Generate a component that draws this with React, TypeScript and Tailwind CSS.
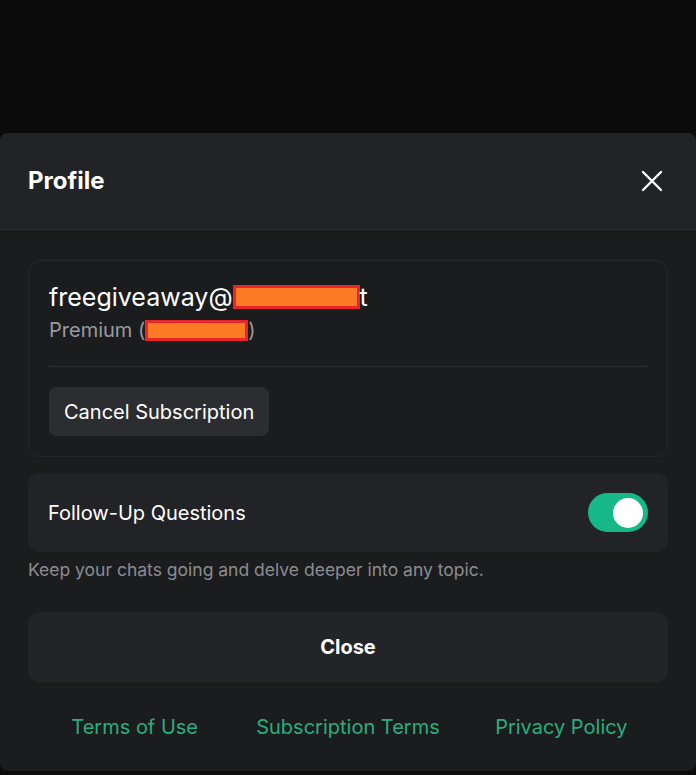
import React, { useState } from 'react';

const Redacted: React.FC<{ width: number; height: number }> = ({ width, height }) => (
  <span
    className="inline-block align-middle border-[3px] border-[#e8262a] bg-[#fd7a25]"
    style={{ width, height }}
  />
);

const Toggle: React.FC<{ on: boolean; onChange: (v: boolean) => void }> = ({ on, onChange }) => (
  <button
    onClick={() => onChange(!on)}
    className={`flex h-[39px] w-[60px] items-center rounded-full px-[5px] transition ${
      on ? 'justify-end bg-[#15b886]' : 'justify-start bg-[#3a3b40]'
    }`}
    aria-pressed={on}
  >
    <span className="block h-[30px] w-[30px] rounded-full bg-white" />
  </button>
);

export default function App() {
  const [followUps, setFollowUps] = useState(true);

  return (
    <div className="min-h-[775px] bg-[#0b0b0c] pt-[133px] font-['Inter','Noto_Sans',sans-serif]">
      <div className="flex h-[638px] flex-col overflow-hidden rounded-[8px] bg-[#1b1c1e]">
        <div className="flex h-[97px] items-center justify-between border-b border-[#2b2c30] bg-[#222327] pl-[28px] pr-[32px]">
          <h2 className="text-[24px] font-bold text-white">Profile</h2>
          <button className="text-white" aria-label="Close">
            <svg width="24" height="24" viewBox="0 0 24 24" fill="none" stroke="currentColor" strokeWidth={2.4} strokeLinecap="round">
              <path d="M3 3l18 18M21 3L3 21" />
            </svg>
          </button>
        </div>

        <div className="flex flex-col px-[28px] pt-[30px]">
          <div className="rounded-[12px] border border-[#25262a] bg-[#1b1c1e] px-[20px] pb-[20px] pt-[20px]">
            <div className="flex items-center text-[25px] leading-[32px] text-white">
              freegiveaway@
              <Redacted width={127} height={24} />
              t
            </div>
            <div className="mt-[2px] flex items-center text-[20px] leading-[30px] text-[#9a9a9e]">
              Premium (
              <Redacted width={103} height={21} />)
            </div>
            <div className="mt-[21px] h-px bg-[#2c2d31]" />
            <button className="mt-[20px] h-[49px] rounded-[8px] bg-[#2c2d31] px-[15px] text-[20px] text-white">
              Cancel Subscription
            </button>
          </div>

          <div className="mt-[16px] flex h-[79px] items-center justify-between rounded-[12px] bg-[#222327] px-[20px]">
            <span className="text-[20px] text-white">Follow-Up Questions</span>
            <Toggle on={followUps} onChange={setFollowUps} />
          </div>
          <p className="mt-[5px] text-[17.5px] leading-[26px] text-[#8c8c90]">
            Keep your chats going and delve deeper into any topic.
          </p>

          <button className="mt-[29px] h-[70px] rounded-[12px] bg-[#232428] text-[20px] font-bold text-white">
            Close
          </button>

          <div className="mt-[31px] grid grid-cols-3 text-center text-[20px] leading-[28px] text-[#2aae7f]">
            <a href="#">Terms of Use</a>
            <a href="#">Subscription Terms</a>
            <a href="#">Privacy Policy</a>
          </div>
        </div>
      </div>
    </div>
  );
}
